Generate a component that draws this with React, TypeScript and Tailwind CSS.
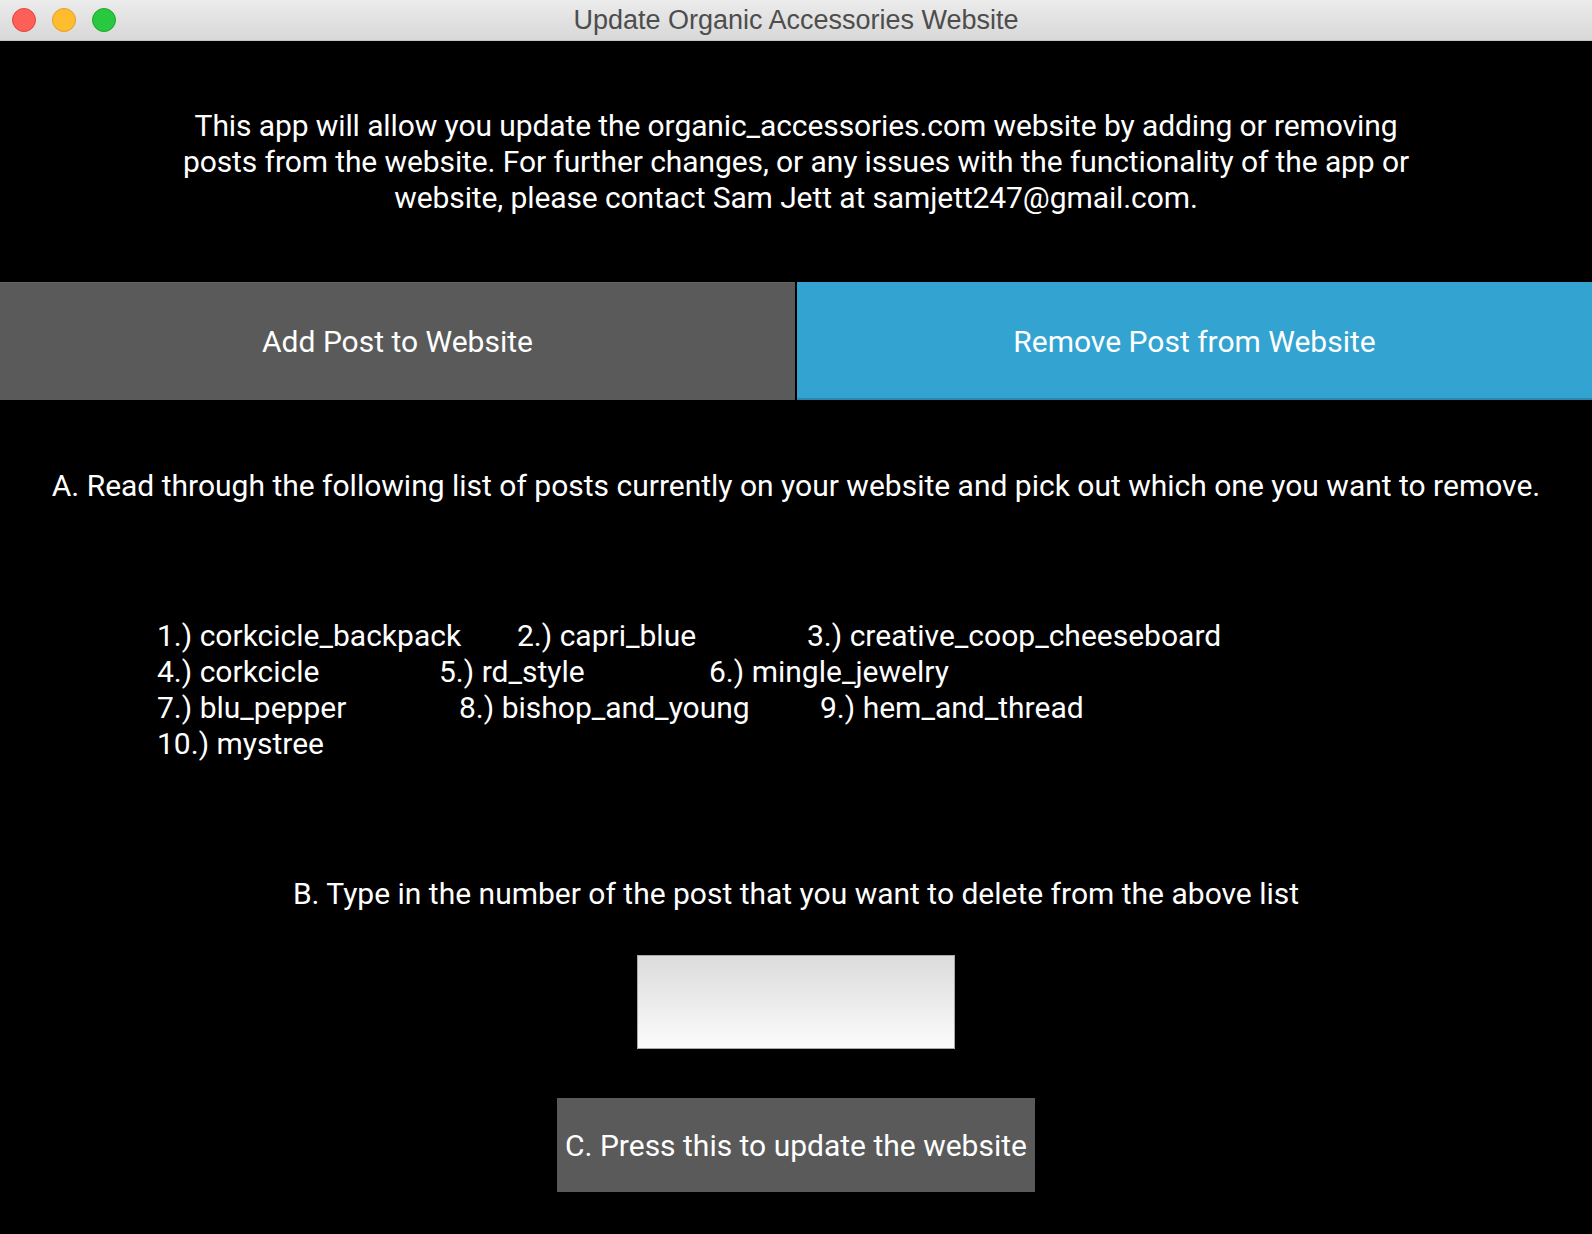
import * as React from "react";

const posts: { label: string; width: number }[][] = [
  [
    { label: "1.) corkcicle_backpack", width: 360 },
    { label: "2.) capri_blue", width: 290 },
    { label: "3.) creative_coop_cheeseboard", width: 0 },
  ],
  [
    { label: "4.) corkcicle", width: 282 },
    { label: "5.) rd_style", width: 270 },
    { label: "6.) mingle_jewelry", width: 0 },
  ],
  [
    { label: "7.) blu_pepper", width: 302 },
    { label: "8.) bishop_and_young", width: 361 },
    { label: "9.) hem_and_thread", width: 0 },
  ],
  [{ label: "10.) mystree", width: 0 }],
];

function TitleBar() {
  return (
    <div className="relative flex h-[41px] items-center justify-center border-b border-[#c4c4c4] bg-gradient-to-b from-[#ececec] to-[#d8d8d8]">
      <div className="absolute left-[12px] top-[8px] flex gap-[16px]">
        <span className="h-[24px] w-[24px] rounded-full border border-[#e0443e] bg-[#fe5f57]" />
        <span className="h-[24px] w-[24px] rounded-full border border-[#dea123] bg-[#febc2e]" />
        <span className="h-[24px] w-[24px] rounded-full border border-[#1aab29] bg-[#28c840]" />
      </div>
      <span className="font-['Liberation_Sans',sans-serif] text-[27px] text-[#4d4d4d]">
        Update Organic Accessories Website
      </span>
    </div>
  );
}

export default function App() {
  const [postNumber, setPostNumber] = React.useState("");

  return (
    <div className="flex h-[1234px] w-[1592px] flex-col overflow-hidden bg-black font-['Roboto',sans-serif] text-[30px] text-white">
      <TitleBar />

      {/* intro */}
      <div className="flex h-[241px] items-center justify-center text-center leading-[36px] tracking-[-0.1px]">
        <p>
          This app will allow you update the organic_accessories.com website by adding or removing
          <br />
          posts from the website. For further changes, or any issues with the functionality of the app or
          <br />
          website, please contact Sam Jett at samjett247@gmail.com.
        </p>
      </div>

      {/* tabs */}
      <div className="flex h-[118px] gap-[2px]">
        <button className="flex w-[795px] items-center justify-center border-t border-[#646464] bg-[#5a5a5a] text-white">
          Add Post to Website
        </button>
        <button className="flex flex-1 items-center justify-center bg-[#33a4d1] text-white shadow-[inset_0_-2px_0_#2b86ac]">
          Remove Post from Website
        </button>
      </div>

      {/* step A */}
      <div className="flex h-[170px] items-center justify-center">
        A. Read through the following list of posts currently on your website and pick out which one you want to remove.
      </div>

      {/* list */}
      <div className="flex h-[274px] flex-col pl-[157px] pt-[48px] leading-[36px]">
        {posts.map((row, i) => (
          <div key={i} className="flex whitespace-nowrap">
            {row.map((p) => (
              <span
                key={p.label}
                className={p.width ? "shrink-0" : ""}
                style={p.width ? { width: p.width } : undefined}
              >
                {p.label}
              </span>
            ))}
          </div>
        ))}
      </div>

      {/* step B */}
      <div className="flex h-[98px] items-center justify-center">
        B. Type in the number of the post that you want to delete from the above list
      </div>

      <div className="flex flex-col items-center gap-[49px] pt-[13px]">
        <input
          value={postNumber}
          onChange={(e) => setPostNumber(e.target.value)}
          className="h-[94px] w-[318px] border border-[#a9a9a9] bg-gradient-to-b from-[#dcdcdc] to-[#fbfbfb] px-3 text-black outline-none"
        />
        <button className="h-[94px] w-[478px] bg-[#5a5a5a] text-white">
          C. Press this to update the website
        </button>
      </div>
    </div>
  );
}
